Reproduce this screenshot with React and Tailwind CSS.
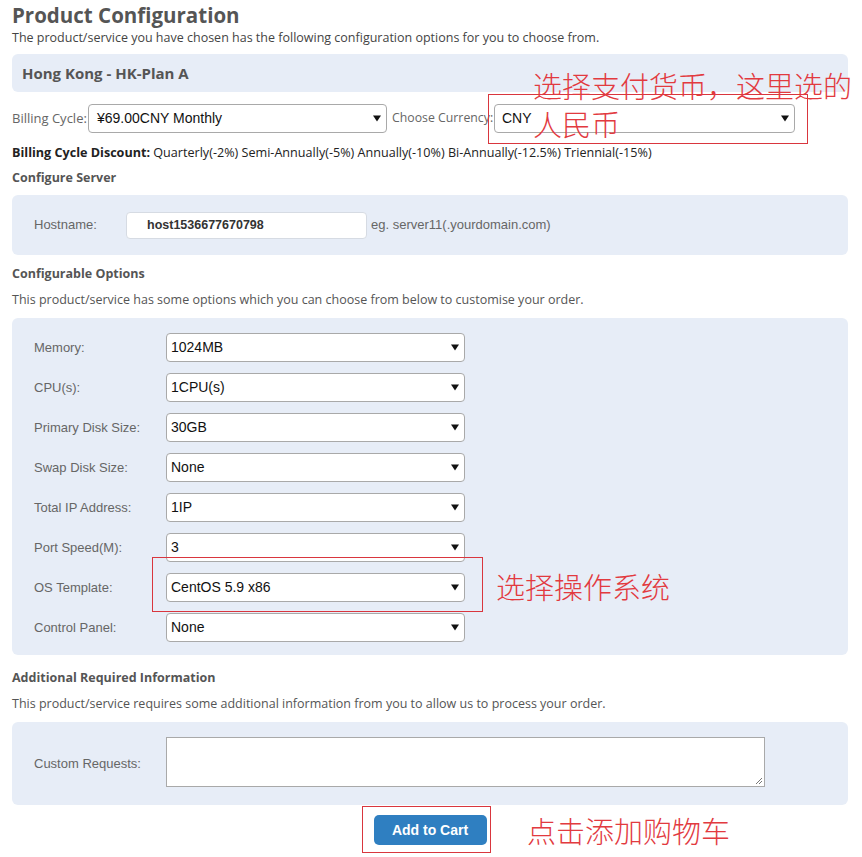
import React from "react";

const OPEN = { fontFamily: '"Open Sans", "Noto Sans", sans-serif' };
const ARIAL = { fontFamily: '"Liberation Sans", Arial, sans-serif' };
const CJK = { fontFamily: '"Noto Sans CJK SC", "Noto Sans", sans-serif' };

function Arrow() {
  return (
    <svg width="8" height="7" viewBox="0 0 8 7" className="shrink-0">
      <path d="M0 0.5 L8 0.5 L4 6.5 Z" fill="#111" />
    </svg>
  );
}

function Select({ value, className = "", pad = "pl-[4px]" }) {
  return (
    <div
      className={`shrink-0 h-[29px] bg-white border border-[#a9a9a9] rounded-[4px] flex items-center justify-between ${pad} pr-[5px] text-[14px] text-[#111] ${className}`}
      style={ARIAL}
    >
      <span>{value}</span>
      <Arrow />
    </div>
  );
}

const options = [
  ["Memory:", "1024MB"],
  ["CPU(s):", "1CPU(s)"],
  ["Primary Disk Size:", "30GB"],
  ["Swap Disk Size:", "None"],
  ["Total IP Address:", "1IP"],
  ["Port Speed(M):", "3"],
  ["OS Template:", "CentOS 5.9 x86"],
  ["Control Panel:", "None"],
];

export default function App() {
  return (
    <div className="relative w-[862px] h-[857px] bg-white overflow-hidden text-[#333]" style={OPEN}>
      <div className="pl-[12px] pr-[14px]">
        <div className="h-[30px] pt-[3px] text-[20.5px] leading-[24px] font-bold text-[#555]">
          Product Configuration
        </div>
        <div className="h-[16px] text-[12.5px] leading-[16px] text-[#444]">
          The product/service you have chosen has the following configuration options for you to choose from.
        </div>

        <div className="mt-[8px] h-[38px] bg-[#e7edf7] rounded-[6px] flex items-center px-[10px] text-[15px] font-bold text-[#555]">
          Hong Kong - HK-Plan A
        </div>

        <div className="mt-[12px] h-[29px] flex items-center text-[13px] text-[#666] whitespace-nowrap">
          <span className="shrink-0 w-[76px]">Billing Cycle:</span>
          <Select value="¥69.00CNY Monthly" className="w-[299px]" pad="pl-[8px]" />
          <span className="shrink-0 ml-[5px] w-[102px] text-[12.3px]">Choose Currency:</span>
          <Select value="CNY" className="w-[301px]" pad="pl-[7px]" />
        </div>

        <div className="mt-[12px] h-[16px] text-[12.6px] leading-[16px] text-[#222] whitespace-nowrap">
          <span className="font-bold">Billing Cycle Discount:</span> Quarterly(-2%) Semi-Annually(-5%) Annually(-10%) Bi-Annually(-12.5%) Triennial(-15%)
        </div>

        <div className="mt-[9px] h-[16px] text-[12.5px] leading-[16px] font-bold text-[#555]">Configure Server</div>

        <div className="mt-[9px] h-[60px] bg-[#e7edf7] rounded-[6px] flex items-center pl-[22px]" style={ARIAL}>
          <span className="w-[92px] text-[13px] text-[#666]">Hostname:</span>
          <div className="w-[241px] h-[27px] bg-white border border-[#d6dbe3] rounded-[4px] flex items-center pl-[20px] text-[12.5px] font-bold text-[#333]">
            host1536677670798
          </div>
          <span className="ml-[4px] text-[13px] text-[#666]">eg. server11(.yourdomain.com)</span>
        </div>

        <div className="mt-[11px] h-[16px] text-[12.5px] leading-[16px] font-bold text-[#555]">Configurable Options</div>
        <div className="mt-[10px] h-[16px] text-[12.5px] leading-[16px] text-[#555]">
          This product/service has some options which you can choose from below to customise your order.
        </div>

        <div className="mt-[10px] h-[337px] bg-[#e7edf7] rounded-[6px] pt-[15px] pl-[22px] flex flex-col gap-[11px]">
          {options.map(([label, value]) => (
            <div key={label} className="flex items-center h-[29px]">
              <span className="w-[132px] text-[13px] text-[#666]" style={ARIAL}>{label}</span>
              <Select value={value} className="w-[299px]" />
            </div>
          ))}
        </div>

        <div className="mt-[15px] h-[16px] text-[12.5px] leading-[16px] font-bold text-[#555]">Additional Required Information</div>
        <div className="mt-[10px] h-[16px] text-[12.5px] leading-[16px] text-[#555]">
          This product/service requires some additional information from you to allow us to process your order.
        </div>

        <div className="mt-[10px] h-[83px] bg-[#e7edf7] rounded-[6px] pt-[15px] pl-[22px] flex">
          <span className="w-[132px] mt-[17px] text-[13px] text-[#666]" style={ARIAL}>Custom Requests:</span>
          <div className="relative w-[599px] h-[50px] bg-white border border-[#a9a9a9]">
            <svg width="8" height="8" viewBox="0 0 8 8" className="absolute right-[1px] bottom-[1px]">
              <path d="M7 1 L1 7 M7 4 L4 7" stroke="#777" strokeWidth="1" />
            </svg>
          </div>
        </div>

        <div className="mt-[10px] flex justify-center">
          <div className="w-[113px] h-[30px] bg-[#2f7fc1] rounded-[5px] flex items-center justify-center text-[14px] font-bold text-white" style={ARIAL}>
            Add to Cart
          </div>
        </div>
      </div>

      {/* annotations */}
      <div className="absolute left-[488px] top-[94px] w-[320px] h-[50px] border border-[#d9363e]" />
      <div className="absolute left-[533px] top-[66px] text-[29px] leading-[38px] font-light text-[#e23a3f] whitespace-nowrap" style={CJK}>
        选择支付货币，这里选的
        <br />
        人民币
      </div>

      <div className="absolute left-[152px] top-[557px] w-[331px] h-[55px] border border-[#d9363e]" />
      <div className="absolute left-[496px] top-[567px] text-[29px] leading-[38px] font-light text-[#e23a3f] whitespace-nowrap" style={CJK}>
        选择操作系统
      </div>

      <div className="absolute left-[362px] top-[806px] w-[129px] h-[47px] border border-[#d9363e]" />
      <div className="absolute left-[527px] top-[811px] text-[29px] leading-[38px] font-light text-[#e23a3f] whitespace-nowrap" style={CJK}>
        点击添加购物车
      </div>
    </div>
  );
}
